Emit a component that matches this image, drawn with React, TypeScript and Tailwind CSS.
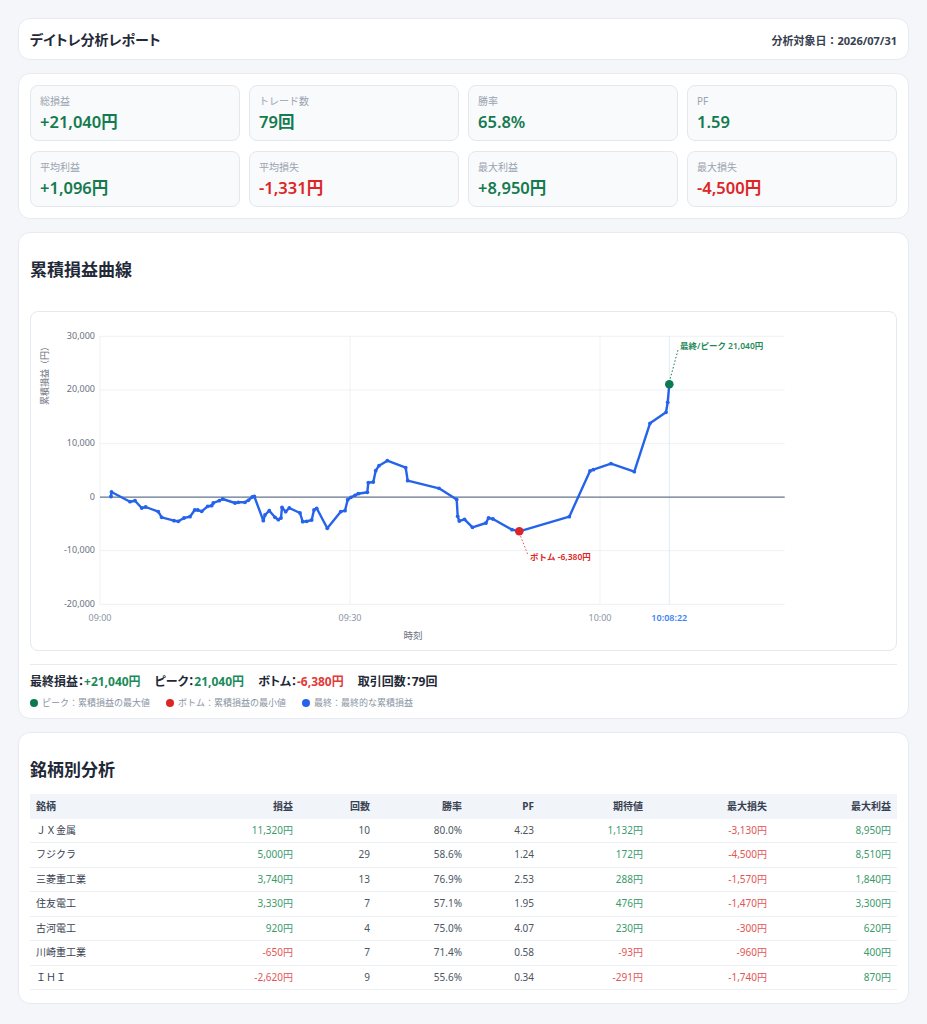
import React from "react";

const pts: [number, number][] = [
  [111, 497.5], [111.5, 493], [130, 502.7], [135, 501.7], [141.7, 509], [145.7, 508], [158.3, 512.7], [161.7, 518.3],
  [174, 521.7], [178.3, 522.3], [184, 519], [190, 517.7], [194.7, 511], [197.7, 511], [201.7, 512.3], [207.7, 507.3],
  [211.7, 506.7], [213.3, 504], [219.3, 501.7], [222.7, 500], [235, 504], [238.3, 503.3], [245, 503.3], [248.3, 501.3],
  [252.3, 498], [254.3, 497.3], [263.3, 521.7], [265, 516], [269.3, 511.7], [275, 518.3], [278.3, 520.7], [281, 519],
  [282, 508.3], [285.7, 512.7], [289.3, 509], [300, 514], [302.7, 522.7], [306.7, 522.3], [311.7, 521], [314, 511],
  [316.7, 509.3], [327.3, 529.3], [340.7, 512.7], [345, 511.7], [347.7, 500.7], [351, 498.3], [355, 496.3], [358.3, 494.7],
  [367.3, 493.3], [368.3, 483.7], [373.3, 483], [375.7, 471.7], [379, 466.7], [387.3, 461.7], [405.7, 468.7], [407.7, 481.7],
  [439, 489.3], [456.7, 500.5], [457.7, 517.3], [459.3, 522], [464.5, 520.3], [472.5, 528.3], [486, 524], [488.5, 519],
  [493, 520], [512, 530.7], [519.3, 532.3], [569.3, 517.7], [590, 472], [593.3, 470.7], [611, 464.7], [634.3, 472.7],
  [650, 424.3], [666, 413.3], [667.7, 403.3], [669.3, 385.3],
];

const yTicks: [string, number][] = [
  ["30,000", 337.3],
  ["20,000", 391],
  ["10,000", 444.7],
  ["0", 498.1],
  ["-10,000", 551.7],
  ["-20,000", 605.3],
];

function Chart() {
  const d = pts.map((p, i) => `${i === 0 ? "M" : "L"}${p[0]},${p[1]}`).join(" ");
  return (
    <svg width={865} height={338} viewBox="31 313 865 338" className="block">
      {yTicks.map(([label, y]) =>
        label === "0" ? null : (
          <line key={label} x1={100} x2={784.7} y1={y} y2={y} stroke="#eef1f5" strokeWidth={1} />
        )
      )}
      <line x1={100} x2={100} y1={337.3} y2={605.3} stroke="#eef1f5" strokeWidth={1} />
      <line x1={350} x2={350} y1={337.3} y2={605.3} stroke="#eef1f5" strokeWidth={1} />
      <line x1={600} x2={600} y1={337.3} y2={605.3} stroke="#eef1f5" strokeWidth={1} />
      <line x1={669.3} x2={669.3} y1={337.3} y2={605.3} stroke="#e3eaf6" strokeWidth={1} />
      <line x1={100} x2={784.7} y1={498.1} y2={498.1} stroke="#64748b" strokeWidth={1.4} />
      {yTicks.map(([label, y]) => (
        <text key={label} x={95} y={y} fontSize={9} fill="#6b7280" textAnchor="end" dominantBaseline="middle">
          {label}
        </text>
      ))}
      <text
        x={46}
        y={343}
        transform="rotate(-90 46 343)"
        fontSize={9}
        fill="#6b7280"
        textAnchor="end"
        dominantBaseline="middle"
      >
        累積損益（円）
      </text>
      <text x={100} y={620} fontSize={9} fill="#8b95a5" textAnchor="middle" dominantBaseline="middle">09:00</text>
      <text x={350} y={620} fontSize={9} fill="#8b95a5" textAnchor="middle" dominantBaseline="middle">09:30</text>
      <text x={600} y={620} fontSize={9} fill="#8b95a5" textAnchor="middle" dominantBaseline="middle">10:00</text>
      <text x={669.3} y={620} fontSize={9} fill="#3b82f6" fontWeight={600} textAnchor="middle" dominantBaseline="middle">10:08:22</text>
      <text x={413} y={637} fontSize={9.5} fill="#6b7280" textAnchor="middle" dominantBaseline="middle">時刻</text>

      <path d={d} fill="none" stroke="#2563eb" strokeWidth={2.4} strokeLinejoin="round" strokeLinecap="round" />
      {pts.map((p, i) => (
        <circle key={i} cx={p[0]} cy={p[1]} r={1.9} fill="#2563eb" />
      ))}

      <line x1={669.3} y1={383} x2={678} y2={351} stroke="#0b7a50" strokeWidth={1} strokeDasharray="1.5 2" />
      <circle cx={669.3} cy={385.3} r={4.3} fill="#0b7a50" />
      <text x={680} y={348} fontSize={8.5} fontWeight={600} fill="#1f8a5b" dominantBaseline="middle">
        最終/ピーク 21,040円
      </text>

      <line x1={519.3} y1={534} x2={528} y2={556} stroke="#e05252" strokeWidth={1} strokeDasharray="1.5 2" />
      <circle cx={519.3} cy={532.3} r={4.3} fill="#dc2626" />
      <text x={530} y={558.3} fontSize={8.5} fontWeight={600} fill="#dc2626" dominantBaseline="middle">
        ボトム -6,380円
      </text>
    </svg>
  );
}

const stats: { label: string; value: string; red?: boolean }[] = [
  { label: "総損益", value: "+21,040円" },
  { label: "トレード数", value: "79回" },
  { label: "勝率", value: "65.8%" },
  { label: "PF", value: "1.59" },
  { label: "平均利益", value: "+1,096円" },
  { label: "平均損失", value: "-1,331円", red: true },
  { label: "最大利益", value: "+8,950円" },
  { label: "最大損失", value: "-4,500円", red: true },
];

const rows: [string, string, string, string, string, string, string, string][] = [
  ["ＪＸ金属", "11,320円", "10", "80.0%", "4.23", "1,132円", "-3,130円", "8,950円"],
  ["フジクラ", "5,000円", "29", "58.6%", "1.24", "172円", "-4,500円", "8,510円"],
  ["三菱重工業", "3,740円", "13", "76.9%", "2.53", "288円", "-1,570円", "1,840円"],
  ["住友電工", "3,330円", "7", "57.1%", "1.95", "476円", "-1,470円", "3,300円"],
  ["古河電工", "920円", "4", "75.0%", "4.07", "230円", "-300円", "620円"],
  ["川崎重工業", "-650円", "7", "71.4%", "0.58", "-93円", "-960円", "400円"],
  ["ＩＨＩ", "-2,620円", "9", "55.6%", "0.34", "-291円", "-1,740円", "870円"],
];

function money(v: string) {
  return v.startsWith("-") ? "text-[#e25555]" : "text-[#3a9a6c]";
}

export default function App() {
  return (
    <div className="min-h-screen bg-[#f4f6fa] p-[18px] font-['Noto_Sans','Noto_Sans_CJK_JP',sans-serif] text-[#1f2937]">
      <div className="flex flex-col gap-[13px]">
        {/* Header */}
        <div className="bg-white rounded-xl border border-[#e7eaf0] px-[11px] pt-[10px] pb-[8px] flex items-baseline justify-between">
          <h1 className="text-[14px] leading-[22px] font-bold text-[#1f2937] [font-feature-settings:'palt']">
            デイトレ分析レポート
          </h1>
          <div className="text-[11px] font-bold text-[#374151]">分析対象日：2026/07/31</div>
        </div>

        {/* Stats */}
        <div className="bg-white rounded-xl border border-[#e7eaf0] p-[11px]">
          <div className="grid grid-cols-4 gap-x-[9px] gap-y-[10px]">
            {stats.map((s) => (
              <div key={s.label} className="h-[56px] rounded-lg border border-[#e3e8ef] bg-[#f8fafc] px-[9px] pt-[8px]">
                <div className="text-[10px] leading-[14px] text-[#9aa3af]">{s.label}</div>
                <div
                  className={`mt-[2px] text-[16.5px] leading-[24px] font-semibold ${s.red ? "text-[#dc2626]" : "text-[#157a4f]"}`}
                >
                  {s.value}
                </div>
              </div>
            ))}
          </div>
        </div>

        {/* Chart */}
        <div className="bg-white rounded-xl border border-[#e7eaf0] px-[11px] pt-[23px] pb-[8px]">
          <h2 className="text-[17px] leading-[28px] font-bold text-[#1f2937] mb-[27px]">累積損益曲線</h2>
          <div className="rounded-lg border border-[#e5e8ee] w-full">
            <Chart />
          </div>
          <div className="mt-[13px] border-t border-[#e7eaf0] pt-[9px]">
            <div className="flex gap-[14px] text-[12px] leading-[16px] font-bold text-[#1f2937] [font-feature-settings:'palt']">
              <span>
                最終損益：<span className="text-[#1a8a5a]">+21,040円</span>
              </span>
              <span>
                ピーク：<span className="text-[#1a8a5a]">21,040円</span>
              </span>
              <span>
                ボトム：<span className="text-[#e03b3b]">-6,380円</span>
              </span>
              <span>取引回数：79回</span>
            </div>
            <div className="mt-[6px] flex gap-[16px] text-[9px] leading-[14px] text-[#8a94a3]">
              <span className="flex items-center">
                <span className="w-[8px] h-[8px] rounded-full bg-[#0b7a50] mr-[4px]" />
                ピーク：累積損益の最大値
              </span>
              <span className="flex items-center">
                <span className="w-[8px] h-[8px] rounded-full bg-[#dc2626] mr-[4px]" />
                ボトム：累積損益の最小値
              </span>
              <span className="flex items-center">
                <span className="w-[8px] h-[8px] rounded-full bg-[#2563eb] mr-[4px]" />
                最終：最終的な累積損益
              </span>
            </div>
          </div>
        </div>

        {/* Table */}
        <div className="bg-white rounded-xl border border-[#e7eaf0] px-[11px] pt-[23px] pb-[13px]">
          <h2 className="text-[17px] leading-[28px] font-bold text-[#1f2937] mb-[10px]">銘柄別分析</h2>
          <table className="w-full table-fixed border-collapse text-[10px] leading-[13.5px]">
            <colgroup>
              <col className="w-[150px]" />
              <col className="w-[119px]" />
              <col className="w-[77px]" />
              <col className="w-[92px]" />
              <col className="w-[72px]" />
              <col className="w-[109px]" />
              <col className="w-[124px]" />
              <col className="w-[124px]" />
            </colgroup>
            <thead>
              <tr className="bg-[#f1f4f8] text-[#374151] font-bold">
                <th className="px-[6px] py-[5.5px] text-left font-bold">銘柄</th>
                <th className="px-[6px] py-[5.5px] text-right font-bold">損益</th>
                <th className="px-[6px] py-[5.5px] text-right font-bold">回数</th>
                <th className="px-[6px] py-[5.5px] text-right font-bold">勝率</th>
                <th className="px-[6px] py-[5.5px] text-right font-bold">PF</th>
                <th className="px-[6px] py-[5.5px] text-right font-bold">期待値</th>
                <th className="px-[6px] py-[5.5px] text-right font-bold">最大損失</th>
                <th className="px-[6px] py-[5.5px] text-right font-bold">最大利益</th>
              </tr>
            </thead>
            <tbody>
              {rows.map((r) => (
                <tr key={r[0]} className="border-b border-[#eceff3]">
                  <td className="px-[6px] py-[5px] text-left text-[#374151]">{r[0]}</td>
                  <td className={`px-[6px] py-[5px] text-right ${money(r[1])}`}>{r[1]}</td>
                  <td className="px-[6px] py-[5px] text-right text-[#4b5563]">{r[2]}</td>
                  <td className="px-[6px] py-[5px] text-right text-[#4b5563]">{r[3]}</td>
                  <td className="px-[6px] py-[5px] text-right text-[#4b5563]">{r[4]}</td>
                  <td className={`px-[6px] py-[5px] text-right ${money(r[5])}`}>{r[5]}</td>
                  <td className="px-[6px] py-[5px] text-right text-[#e25555]">{r[6]}</td>
                  <td className="px-[6px] py-[5px] text-right text-[#3a9a6c]">{r[7]}</td>
                </tr>
              ))}
            </tbody>
          </table>
        </div>
      </div>
    </div>
  );
}
